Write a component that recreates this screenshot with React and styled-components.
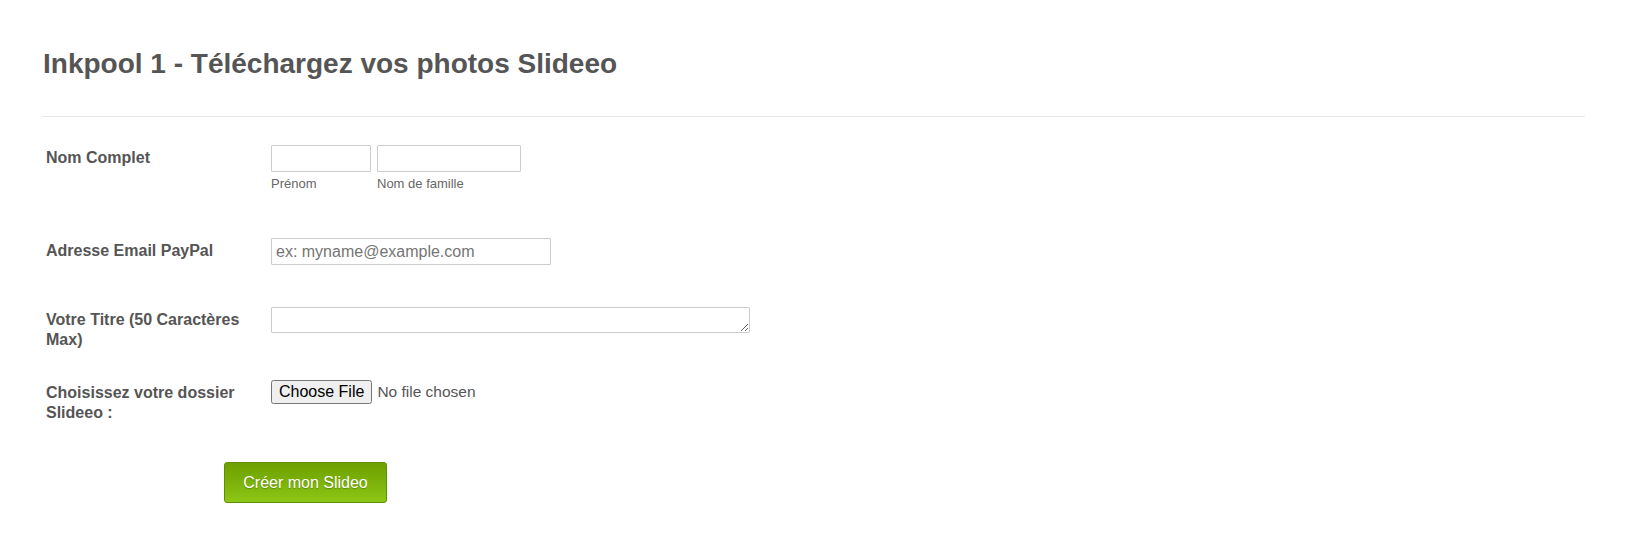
import styled, { createGlobalStyle } from "styled-components"

const GlobalStyle = createGlobalStyle`
    body {
        margin: 0;
        background: #ffffff;
        font-family: "Liberation Sans", Arial, sans-serif;
    }
`

export default function App() {
    return (
        <Page>
            <GlobalStyle />
            <Header>
                <Title>Inkpool 1 - Téléchargez vos photos Slideeo</Title>
            </Header>

            <Form onSubmit={e => e.preventDefault()}>
                <Row $height={93}>
                    <Label>Nom Complet</Label>
                    <Field>
                        <NameGroup>
                            <SubField>
                                <TextInput type="text" $width={100} />
                                <SubLabel>Prénom</SubLabel>
                            </SubField>
                            <SubField>
                                <TextInput type="text" $width={144} />
                                <SubLabel>Nom de famille</SubLabel>
                            </SubField>
                        </NameGroup>
                    </Field>
                </Row>

                <Row $height={69}>
                    <Label>Adresse Email PayPal</Label>
                    <Field>
                        <TextInput type="email" $width={280} placeholder="ex: myname@example.com" />
                    </Field>
                </Row>

                <Row $height={73}>
                    <Label>Votre Titre (50 Caractères Max)</Label>
                    <Field>
                        <TextArea rows={1} />
                    </Field>
                </Row>

                <Row $height={82}>
                    <Label>Choisissez votre dossier Slideeo :</Label>
                    <Field>
                        <FileInput type="file" />
                    </Field>
                </Row>

                <ButtonRow>
                    <SubmitButton type="submit">Créer mon Slideo</SubmitButton>
                </ButtonRow>
            </Form>
        </Page>
    )
}

const Page = styled.div`
    padding: 0 43px 0 42px;
    box-sizing: border-box;
    width: 100%;
`

const Header = styled.div`
    padding-top: 46px;
    padding-bottom: 34px;
    border-bottom: 1px solid #e6e6e6;
`

const Title = styled.h1`
    margin: 0;
    padding-left: 1px;
    font-size: 28px;
    font-weight: bold;
    color: #555555;
    line-height: 36px;
`

const Form = styled.form`
    padding-top: 28px;
    display: flex;
    flex-direction: column;
`

const Row = styled.div`
    display: flex;
    align-items: flex-start;
    height: ${p => p.$height}px;
`

const Label = styled.label`
    width: 210px;
    margin-left: 4px;
    margin-right: 15px;
    padding-top: 3px;
    font-size: 16px;
    font-weight: bold;
    color: #555555;
    line-height: 20px;
`

const Field = styled.div`
    display: flex;
`

const NameGroup = styled.div`
    display: flex;
    gap: 6px;
`

const SubField = styled.div`
    display: flex;
    flex-direction: column;
`

const TextInput = styled.input`
    width: ${p => p.$width}px;
    height: 27px;
    box-sizing: border-box;
    border: 1px solid #cccccc;
    border-radius: 1px;
    padding: 2px 4px;
    font-family: "Liberation Sans", Arial, sans-serif;
    font-size: 16px;
    color: #555555;
    outline: none;

    ::placeholder {
        color: #777777;
    }
`

const SubLabel = styled.span`
    margin-top: 4px;
    font-size: 13px;
    color: #666666;
`

const TextArea = styled.textarea`
    width: 479px;
    height: 26px;
    box-sizing: border-box;
    border: 1px solid #cccccc;
    border-radius: 1px;
    font-family: "Liberation Sans", Arial, sans-serif;
    font-size: 15px;
    outline: none;
`

const FileInput = styled.input`
    font-family: "Liberation Sans", Arial, sans-serif;
    font-size: 15.5px;
    color: #555555;

    &::file-selector-button {
        font-family: "Liberation Sans", Arial, sans-serif;
        font-size: 16px;
        color: #000000;
        margin-right: 5px;
    }
`

const ButtonRow = styled.div`
    display: flex;
    padding-left: 182px;
`

const SubmitButton = styled.button`
    width: 163px;
    height: 41px;
    border: 1px solid #5f8f00;
    border-radius: 3px;
    background: linear-gradient(to bottom, #6ea000 0%, #7cb20a 50%, #8dc716 100%);
    color: #ffffff;
    font-family: "Liberation Sans", Arial, sans-serif;
    font-size: 16px;
    text-shadow: 0 1px 1px rgba(0, 0, 0, 0.25);
    cursor: pointer;
`
